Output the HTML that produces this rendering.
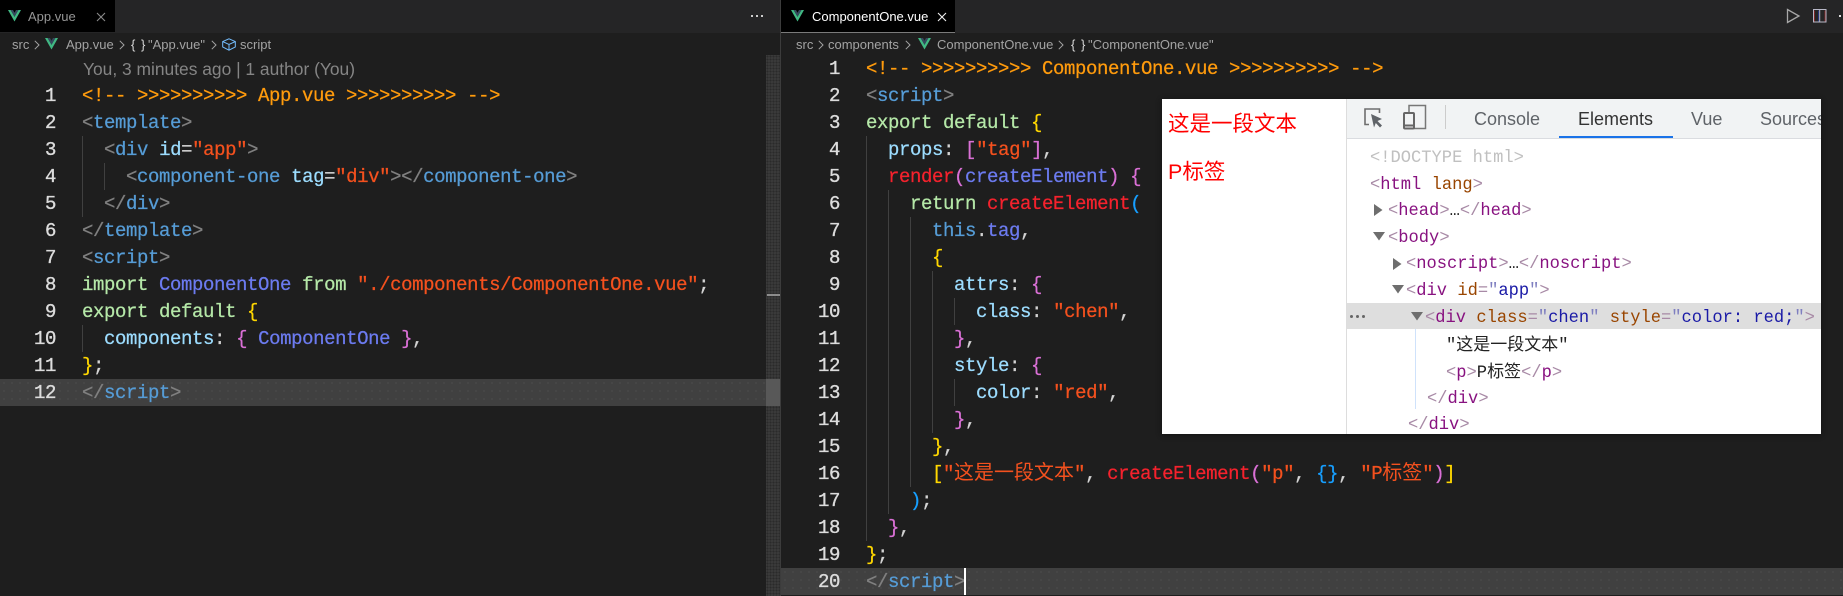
<!DOCTYPE html>
<html lang="zh">
<head>
<meta charset="utf-8">
<title>App.vue</title>
<style>
html,body{margin:0;padding:0;background:#1e1e1e;}
#r{position:relative;width:1843px;height:596px;overflow:hidden;background:#1e1e1e;font-family:"Liberation Sans","Noto Sans CJK SC",sans-serif;}
.a{position:absolute;}
.t{position:absolute;white-space:pre;}
.ui{font-size:13px;line-height:18px;color:#a3a3a3;}
.c{position:absolute;white-space:pre;font-family:"Liberation Mono","Noto Sans CJK SC",monospace;font-size:19px;letter-spacing:-.4px;line-height:27px;height:27px;margin-top:1px;color:#d4d4d4;font-weight:normal;-webkit-text-stroke:.25px;}
.n{position:absolute;white-space:pre;font-family:"Liberation Mono",monospace;font-size:19px;letter-spacing:-.4px;line-height:27px;margin-top:1px;color:#dcdcdc;text-align:right;width:40px;-webkit-text-stroke:.35px #dcdcdc;}
.c b{font-weight:normal;font-size:20px;letter-spacing:0;font-family:"Noto Sans CJK SC",sans-serif;line-height:20px;-webkit-text-stroke:0;}
.g{color:#808080}.h{color:#569cd6}.o{color:#ff9b0d}.s{color:#f4511e}.k{color:#b5e8a8}.p{color:#6c7bf0}.y{color:#ffd700}.m{color:#da70d6}.v{color:#9cdcfe}.r{color:#f5222d}.u{color:#179fff}
.ig{position:absolute;width:1px;background:#404040;}
.d{position:absolute;white-space:pre;font-family:"Liberation Mono","Noto Sans CJK SC",monospace;font-size:17.1px;line-height:26px;height:26px;color:#222;}
.d b{font-weight:normal;font-family:"Noto Sans CJK SC",sans-serif;font-size:17px;}
.e{color:#a88aa6}.f{color:#881280}.i{color:#994500}.w{color:#1a1aa6}.q{color:#7f7fc0}
.tab{position:absolute;top:105px;font-size:18px;line-height:28px;color:#5f6368;white-space:pre;}
.dots{background-color:#3a3a3a;background-image:radial-gradient(#2a2a2a 0.8px,transparent 1.1px);background-size:3px 3px;}
.dotsl{background-color:#404040;background-image:radial-gradient(#4a4a4a 0.7px,transparent 1px);background-size:8px 8px;}
</style>
</head>
<body>
<div id="r">
<!-- tab bars -->
<div class="a" style="left:0;top:0;width:1843px;height:33px;background:#252526"></div>
<div class="a" style="left:0;top:0;width:115px;height:32px;background:#000"></div>
<div class="a" style="left:781px;top:0;width:174px;height:32px;background:#000"></div>
<div class="a" style="left:781px;top:32px;width:174px;height:1px;background:#7a7a7a"></div>
<div class="a" style="left:780px;top:0;width:1px;height:596px;background:#3c3c3c"></div>

<svg class="a" style="left:8px;top:10px" width="13" height="12" viewBox="0 0 13 12"><path d="M0 0H2.6L6.5 6.8 10.4 0H13L6.5 11.5Z" fill="#41b883"/><path d="M2.6 0H5L6.5 2.7 8 0H10.4L6.5 6.8Z" fill="#35495e"/></svg>
<div class="t ui" style="left:28px;top:8px;color:#969696">App.vue</div>
<svg class="a" style="left:96px;top:12px" width="10" height="10" viewBox="0 0 10 10"><path d="M1 1L9 9M9 1L1 9" stroke="#8a8a8a" stroke-width="1.1" fill="none"/></svg>
<div class="a" style="left:751px;top:15px;width:2px;height:2px;background:#ccc;box-shadow:5px 0 #ccc,10px 0 #ccc"></div>

<svg class="a" style="left:791px;top:10px" width="13" height="12" viewBox="0 0 13 12"><path d="M0 0H2.6L6.5 6.8 10.4 0H13L6.5 11.5Z" fill="#41b883"/><path d="M2.6 0H5L6.5 2.7 8 0H10.4L6.5 6.8Z" fill="#35495e"/></svg>
<div class="t ui" style="left:812px;top:8px;color:#fff">ComponentOne.vue</div>
<svg class="a" style="left:937px;top:12px" width="10" height="10" viewBox="0 0 10 10"><path d="M1 1L9 9M9 1L1 9" stroke="#f0f0f0" stroke-width="1.1" fill="none"/></svg>

<svg class="a" style="left:1786px;top:8px" width="15" height="16" viewBox="0 0 15 16"><path d="M1.5 1.5V14.5L13 8Z" stroke="#a8a8a8" stroke-width="1.3" fill="none"/></svg>
<svg class="a" style="left:1813px;top:9px" width="14" height="14" viewBox="0 0 14 14"><rect x=".5" y=".5" width="12.5" height="12.5" fill="none" stroke="#b9b9c8"/><path d="M6.7 .5V13" stroke="#b9b9c8"/><path d="M1.5 1.5V12.5M12 1.5V12.5" stroke="#a02828" stroke-width=".7"/><path d="M5.6 1.5V12.5" stroke="#2b3fa0" stroke-width=".7"/></svg>
<div class="a" style="left:1839px;top:15px;width:2px;height:2px;background:#ddd"></div>

<!-- left breadcrumb -->
<div class="t ui" style="left:12px;top:36px">src</div>
<svg class="a" style="left:34px;top:40px" width="6" height="10" viewBox="0 0 6 10"><path d="M.8 .8L5 5 .8 9.2" stroke="#a3a3a3" fill="none" stroke-width="1"/></svg>
<svg class="a" style="left:45px;top:38px" width="13" height="12" viewBox="0 0 13 12"><path d="M0 0H2.6L6.5 6.8 10.4 0H13L6.5 11.5Z" fill="#41b883"/><path d="M2.6 0H5L6.5 2.7 8 0H10.4L6.5 6.8Z" fill="#35495e"/></svg>
<div class="t ui" style="left:66px;top:36px">App.vue</div>
<svg class="a" style="left:119px;top:40px" width="6" height="10" viewBox="0 0 6 10"><path d="M.8 .8L5 5 .8 9.2" stroke="#a3a3a3" fill="none" stroke-width="1"/></svg>
<div class="t ui" style="left:131px;top:36px;color:#d8d8d8;font-size:13px;letter-spacing:1px">{ }</div>
<div class="t ui" style="left:148px;top:36px">"App.vue"</div>
<svg class="a" style="left:211px;top:40px" width="6" height="10" viewBox="0 0 6 10"><path d="M.8 .8L5 5 .8 9.2" stroke="#a3a3a3" fill="none" stroke-width="1"/></svg>
<svg class="a" style="left:222px;top:38px" width="14" height="13" viewBox="0 0 14 13"><path d="M7 .8L13.3 3.6V9L7 12.2 .7 9V3.6ZM.7 3.6L7 6.4 13.3 3.6M7 6.4V12.2" fill="none" stroke="#75beff" stroke-width="1"/></svg>
<div class="t ui" style="left:240px;top:36px">script</div>

<!-- right breadcrumb -->
<div class="t ui" style="left:796px;top:36px">src</div>
<svg class="a" style="left:818px;top:40px" width="6" height="10" viewBox="0 0 6 10"><path d="M.8 .8L5 5 .8 9.2" stroke="#a3a3a3" fill="none" stroke-width="1"/></svg>
<div class="t ui" style="left:828px;top:36px">components</div>
<svg class="a" style="left:905px;top:40px" width="6" height="10" viewBox="0 0 6 10"><path d="M.8 .8L5 5 .8 9.2" stroke="#a3a3a3" fill="none" stroke-width="1"/></svg>
<svg class="a" style="left:918px;top:38px" width="13" height="12" viewBox="0 0 13 12"><path d="M0 0H2.6L6.5 6.8 10.4 0H13L6.5 11.5Z" fill="#41b883"/><path d="M2.6 0H5L6.5 2.7 8 0H10.4L6.5 6.8Z" fill="#35495e"/></svg>
<div class="t ui" style="left:937px;top:36px">ComponentOne.vue</div>
<svg class="a" style="left:1058px;top:40px" width="6" height="10" viewBox="0 0 6 10"><path d="M.8 .8L5 5 .8 9.2" stroke="#a3a3a3" fill="none" stroke-width="1"/></svg>
<div class="t ui" style="left:1071px;top:36px;color:#d8d8d8;font-size:13px;letter-spacing:1px">{ }</div>
<div class="t ui" style="left:1088px;top:36px">"ComponentOne.vue"</div>

<!-- code lens -->
<div class="t" style="left:83px;top:58px;font-size:17.4px;line-height:22px;color:#858585">You, 3 minutes ago | 1 author (You)</div>

<!-- highlights & scrollbar -->
<div class="a dotsl" style="left:0;top:379px;width:766px;height:27px"></div>
<div class="a dots" style="left:766px;top:55px;width:14px;height:541px"></div>
<div class="a" style="left:766px;top:379px;width:14px;height:27px;background:#585858"></div>
<div class="a" style="left:767px;top:294px;width:13px;height:2px;background:#8c8c8c"></div>
<div class="a dotsl" style="left:781px;top:568px;width:1062px;height:27px"></div>

<!-- left guides -->
<div class="ig" style="left:82px;top:136px;height:81px"></div>
<div class="ig" style="left:104px;top:163px;height:27px"></div>
<div class="ig" style="left:82px;top:325px;height:27px"></div>

<!-- left numbers -->
<div class="n" style="left:16px;top:82px">1</div>
<div class="n" style="left:16px;top:109px">2</div>
<div class="n" style="left:16px;top:136px">3</div>
<div class="n" style="left:16px;top:163px">4</div>
<div class="n" style="left:16px;top:190px">5</div>
<div class="n" style="left:16px;top:217px">6</div>
<div class="n" style="left:16px;top:244px">7</div>
<div class="n" style="left:16px;top:271px">8</div>
<div class="n" style="left:16px;top:298px">9</div>
<div class="n" style="left:16px;top:325px">10</div>
<div class="n" style="left:16px;top:352px">11</div>
<div class="n" style="left:16px;top:379px">12</div>

<!-- left code -->
<div class="c o" style="left:82px;top:82px">&lt;!-- &gt;&gt;&gt;&gt;&gt;&gt;&gt;&gt;&gt;&gt; App.vue &gt;&gt;&gt;&gt;&gt;&gt;&gt;&gt;&gt;&gt; --&gt;</div>
<div class="c" style="left:82px;top:109px"><span class="g">&lt;</span><span class="h">template</span><span class="g">&gt;</span></div>
<div class="c" style="left:82px;top:136px">  <span class="g">&lt;</span><span class="h">div</span> <span class="v">id</span>=<span class="s">"app"</span><span class="g">&gt;</span></div>
<div class="c" style="left:82px;top:163px">    <span class="g">&lt;</span><span class="h">component-one</span> <span class="v">tag</span>=<span class="s">"div"</span><span class="g">&gt;&lt;/</span><span class="h">component-one</span><span class="g">&gt;</span></div>
<div class="c" style="left:82px;top:190px">  <span class="g">&lt;/</span><span class="h">div</span><span class="g">&gt;</span></div>
<div class="c" style="left:82px;top:217px"><span class="g">&lt;/</span><span class="h">template</span><span class="g">&gt;</span></div>
<div class="c" style="left:82px;top:244px"><span class="g">&lt;</span><span class="h">script</span><span class="g">&gt;</span></div>
<div class="c" style="left:82px;top:271px"><span class="k">import</span> <span class="p">ComponentOne</span> <span class="k">from</span> <span class="s">"./components/ComponentOne.vue"</span>;</div>
<div class="c" style="left:82px;top:298px"><span class="k">export default</span> <span class="y">{</span></div>
<div class="c" style="left:82px;top:325px">  <span class="v">components</span>: <span class="m">{</span> <span class="p">ComponentOne</span> <span class="m">}</span>,</div>
<div class="c" style="left:82px;top:352px"><span class="y">}</span>;</div>
<div class="c" style="left:82px;top:379px"><span class="g">&lt;/</span><span class="h">script</span><span class="g">&gt;</span></div>

<!-- right guides -->
<div class="ig" style="left:866px;top:136px;height:405px"></div>
<div class="ig" style="left:888px;top:190px;height:324px"></div>
<div class="ig" style="left:910px;top:217px;height:270px"></div>
<div class="ig" style="left:932px;top:271px;height:162px"></div>
<div class="ig" style="left:954px;top:298px;height:27px"></div>
<div class="ig" style="left:954px;top:379px;height:27px"></div>

<!-- right numbers -->
<div class="n" style="left:800px;top:55px">1</div>
<div class="n" style="left:800px;top:82px">2</div>
<div class="n" style="left:800px;top:109px">3</div>
<div class="n" style="left:800px;top:136px">4</div>
<div class="n" style="left:800px;top:163px">5</div>
<div class="n" style="left:800px;top:190px">6</div>
<div class="n" style="left:800px;top:217px">7</div>
<div class="n" style="left:800px;top:244px">8</div>
<div class="n" style="left:800px;top:271px">9</div>
<div class="n" style="left:800px;top:298px">10</div>
<div class="n" style="left:800px;top:325px">11</div>
<div class="n" style="left:800px;top:352px">12</div>
<div class="n" style="left:800px;top:379px">13</div>
<div class="n" style="left:800px;top:406px">14</div>
<div class="n" style="left:800px;top:433px">15</div>
<div class="n" style="left:800px;top:460px">16</div>
<div class="n" style="left:800px;top:487px">17</div>
<div class="n" style="left:800px;top:514px">18</div>
<div class="n" style="left:800px;top:541px">19</div>
<div class="n" style="left:800px;top:568px">20</div>

<!-- right code -->
<div class="c o" style="left:866px;top:55px">&lt;!-- &gt;&gt;&gt;&gt;&gt;&gt;&gt;&gt;&gt;&gt; ComponentOne.vue &gt;&gt;&gt;&gt;&gt;&gt;&gt;&gt;&gt;&gt; --&gt;</div>
<div class="c" style="left:866px;top:82px"><span class="g">&lt;</span><span class="h">script</span><span class="g">&gt;</span></div>
<div class="c" style="left:866px;top:109px"><span class="k">export default</span> <span class="y">{</span></div>
<div class="c" style="left:866px;top:136px">  <span class="v">props</span>: <span class="m">[</span><span class="s">"tag"</span><span class="m">]</span>,</div>
<div class="c" style="left:866px;top:163px">  <span class="r">render</span><span class="m">(</span><span class="p">createElement</span><span class="m">)</span> <span class="m">{</span></div>
<div class="c" style="left:866px;top:190px">    <span class="k">return</span> <span class="r">createElement</span><span class="u">(</span></div>
<div class="c" style="left:866px;top:217px">      <span class="h">this</span>.<span class="p">tag</span>,</div>
<div class="c" style="left:866px;top:244px">      <span class="y">{</span></div>
<div class="c" style="left:866px;top:271px">        <span class="v">attrs</span>: <span class="m">{</span></div>
<div class="c" style="left:866px;top:298px">          <span class="v">class</span>: <span class="s">"chen"</span>,</div>
<div class="c" style="left:866px;top:325px">        <span class="m">}</span>,</div>
<div class="c" style="left:866px;top:352px">        <span class="v">style</span>: <span class="m">{</span></div>
<div class="c" style="left:866px;top:379px">          <span class="v">color</span>: <span class="s">"red"</span>,</div>
<div class="c" style="left:866px;top:406px">        <span class="m">}</span>,</div>
<div class="c" style="left:866px;top:433px">      <span class="y">}</span>,</div>
<div class="c" style="left:866px;top:460px">      <span class="y">[</span><span class="s">"<b>这是一段文本</b>"</span>, <span class="r">createElement</span><span class="m">(</span><span class="s">"p"</span>, <span class="u">{}</span>, <span class="s">"P<b>标签</b>"</span><span class="m">)</span><span class="y">]</span></div>
<div class="c" style="left:866px;top:487px">    <span class="u">)</span>;</div>
<div class="c" style="left:866px;top:514px">  <span class="m">}</span>,</div>
<div class="c" style="left:866px;top:541px"><span class="y">}</span>;</div>
<div class="c" style="left:866px;top:568px"><span class="g">&lt;/</span><span class="h">script</span><span class="g">&gt;</span></div>
<div class="a" style="left:964px;top:568px;width:2px;height:27px;background:#fff"></div>

<!-- overlay devtools screenshot -->
<div class="a" style="left:1162px;top:99px;width:659px;height:335px;background:#fff;box-shadow:0 1px 5px #111;overflow:hidden">
  <div class="t" style="left:6px;top:9px;font-size:21.5px;line-height:30px;color:#f00;font-family:'Noto Sans CJK SC',sans-serif;">这是一段文本</div>
  <div class="t" style="left:6px;top:58px;font-size:21.5px;line-height:30px;color:#f00;font-family:'Liberation Sans','Noto Sans CJK SC',sans-serif;">P标签</div>
  <div class="a" style="left:184px;top:0;width:1px;height:335px;background:#ddd"></div>
  <div class="a" style="left:185px;top:0;width:474px;height:39px;background:#f1f3f4;border-bottom:1px solid #dadce0"></div>
  <svg class="a" style="left:200px;top:8px" width="24" height="22" viewBox="0 0 24 22"><path d="M7 17.5H3V2H17.5V6" fill="none" stroke="#6e6e6e" stroke-width="1.6"/><path d="M9 7L20 12 15.5 14 20 18.5 18 20.5 13.8 16 12 20.5Z" fill="#5f6368"/></svg>
  <svg class="a" style="left:240px;top:5px" width="26" height="26" viewBox="0 0 26 26"><path d="M7 8V1.5H23.5V24.5H12" fill="none" stroke="#777" stroke-width="1.5"/><rect x="2" y="9" width="10" height="15.5" rx="1" fill="none" stroke="#666" stroke-width="2"/><path d="M2 21.5H12" stroke="#666" stroke-width="2"/></svg>
  <div class="a" style="left:283px;top:6px;width:1px;height:24px;background:#ccc"></div>
  <div class="tab" style="left:312px;top:6px">Console</div>
  <div class="tab" style="left:416px;top:6px;color:#333">Elements</div>
  <div class="a" style="left:397px;top:37px;width:114px;height:2px;background:#1a73e8"></div>
  <div class="tab" style="left:529px;top:6px">Vue</div>
  <div class="tab" style="left:598px;top:6px">Sources</div>

  <div class="a" style="left:185px;top:204px;width:474px;height:26px;background:#dedede"></div>
  <div class="a" style="left:188px;top:216px;width:3px;height:3px;border-radius:50%;background:#666;box-shadow:6px 0 #666,12px 0 #666"></div>
  <div class="a" style="left:253px;top:230px;width:1px;height:80px;background:#cfe2fb"></div>

  <div class="d" style="left:208px;top:47px;color:#c0c0c0">&lt;!DOCTYPE html&gt;</div>
  <div class="d" style="left:208px;top:74px"><span class="e">&lt;</span><span class="f">html</span> <span class="i">lang</span><span class="e">&gt;</span></div>
  <svg class="a" style="left:212px;top:105px" width="9" height="12" viewBox="0 0 9 12"><path d="M0 0L8.5 6 0 12Z" fill="#6e6e6e"/></svg>
  <div class="d" style="left:226px;top:100px"><span class="e">&lt;</span><span class="f">head</span><span class="e">&gt;</span>…<span class="e">&lt;/</span><span class="f">head</span><span class="e">&gt;</span></div>
  <svg class="a" style="left:211px;top:133px" width="12" height="9" viewBox="0 0 12 9"><path d="M0 0H12L6 8.5Z" fill="#6e6e6e"/></svg>
  <div class="d" style="left:226px;top:127px"><span class="e">&lt;</span><span class="f">body</span><span class="e">&gt;</span></div>
  <svg class="a" style="left:231px;top:159px" width="9" height="12" viewBox="0 0 9 12"><path d="M0 0L8.5 6 0 12Z" fill="#6e6e6e"/></svg>
  <div class="d" style="left:244px;top:153px"><span class="e">&lt;</span><span class="f">noscript</span><span class="e">&gt;</span>…<span class="e">&lt;/</span><span class="f">noscript</span><span class="e">&gt;</span></div>
  <svg class="a" style="left:230px;top:186px" width="12" height="9" viewBox="0 0 12 9"><path d="M0 0H12L6 8.5Z" fill="#6e6e6e"/></svg>
  <div class="d" style="left:244px;top:180px"><span class="e">&lt;</span><span class="f">div</span> <span class="i">id</span><span class="e">=</span><span class="q">"</span><span class="w">app</span><span class="q">"</span><span class="e">&gt;</span></div>
  <svg class="a" style="left:249px;top:213px" width="12" height="9" viewBox="0 0 12 9"><path d="M0 0H12L6 8.5Z" fill="#6e6e6e"/></svg>
  <div class="d" style="left:263px;top:207px"><span class="e">&lt;</span><span class="f">div</span> <span class="i">class</span><span class="e">=</span><span class="q">"</span><span class="w">chen</span><span class="q">"</span> <span class="i">style</span><span class="e">=</span><span class="q">"</span><span class="w">color: red;</span><span class="q">"</span><span class="e">&gt;</span></div>
  <div class="d" style="left:284px;top:231px">"<b>这是一段文本</b>"</div>
  <div class="d" style="left:284px;top:258px"><span class="e">&lt;</span><span class="f">p</span><span class="e">&gt;</span>P<b>标签</b><span class="e">&lt;/</span><span class="f">p</span><span class="e">&gt;</span></div>
  <div class="d" style="left:265px;top:288px"><span class="e">&lt;/</span><span class="f">div</span><span class="e">&gt;</span></div>
  <div class="d" style="left:246px;top:314px"><span class="e">&lt;/</span><span class="f">div</span><span class="e">&gt;</span></div>
</div>
</div>
</body>
</html>
